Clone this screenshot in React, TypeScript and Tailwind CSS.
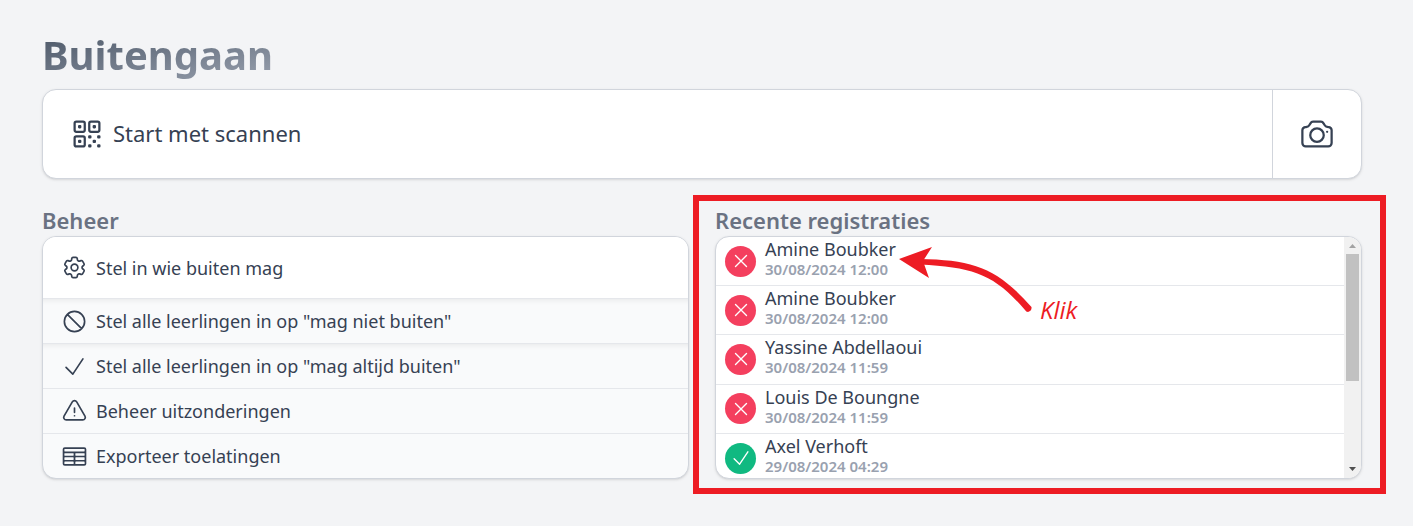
import type { ReactNode } from "react";
import {
  HiOutlineCamera,
  HiOutlineCheck,
  HiOutlineCog6Tooth,
  HiOutlineExclamationTriangle,
  HiOutlineNoSymbol,
  HiOutlineQrCode,
  HiOutlineTableCells,
  HiOutlineXMark,
} from "react-icons/hi2";

type Registration = { name: string; time: string; allowed: boolean };

const registrations: Registration[] = [
  { name: "Amine Boubker", time: "30/08/2024 12:00", allowed: false },
  { name: "Amine Boubker", time: "30/08/2024 12:00", allowed: false },
  { name: "Yassine Abdellaoui", time: "30/08/2024 11:59", allowed: false },
  { name: "Louis De Boungne", time: "30/08/2024 11:59", allowed: false },
  { name: "Axel Verhoft", time: "29/08/2024 04:29", allowed: true },
];

function ActionRow({ icon, label, className }: { icon: ReactNode; label: string; className: string }) {
  return (
    <li className="border-b border-gray-200 last:border-b-0">
      <button type="button" className={`flex w-full items-center gap-2 px-[18px] text-left text-lg leading-6 ${className}`}>
        {icon}
        <span>{label}</span>
      </button>
    </li>
  );
}

function RegistrationRow({ name, time, allowed }: Registration) {
  return (
    <li className="border-b border-gray-200 last:border-b-0">
      <button type="button" className="flex h-full w-full items-center gap-[9px] px-[9px] text-left">
        <span
          className={`flex size-[31px] shrink-0 items-center justify-center rounded-full text-white ${
            allowed ? "bg-[#10b981]" : "bg-[#f43f5e]"
          }`}
        >
          {allowed ? <HiOutlineCheck className="size-[22px]" /> : <HiOutlineXMark className="size-[22px]" />}
        </span>
        <span className="flex flex-col pb-1">
          <span className="text-lg leading-5">{name}</span>
          <span className="text-[15px] leading-5 font-semibold text-gray-400">{time}</span>
        </span>
      </button>
    </li>
  );
}

function Scrollbar() {
  return (
    <div aria-hidden="true" className="flex w-[17px] shrink-0 flex-col items-center bg-[#f1f1f1]">
      <svg viewBox="0 0 17 17" className="size-[17px] shrink-0" fill="#a3a3a3">
        <path d="M5 11h7L8.500 7z" />
      </svg>
      <div className="min-h-0 w-[13px] flex-[127] bg-[#c1c1c1]" />
      <div className="min-h-0 flex-[80]" />
      <svg viewBox="0 0 17 17" className="size-[17px] shrink-0" fill="#505050">
        <path d="M5 6h7l-3.500 4z" />
      </svg>
    </div>
  );
}

export default function App() {
  return (
    <main className="min-h-screen bg-gray-100 pt-7 pr-[51px] pb-12 pl-[42px] font-['Noto_Sans',sans-serif] text-gray-700">
      <h1 className="w-fit bg-linear-to-br from-gray-600 to-gray-400 bg-clip-text text-[40px] leading-[53px] font-bold text-transparent">
        Buitengaan
      </h1>

      <div className="mt-2 flex h-[90px] overflow-hidden rounded-[14px] border border-gray-300 bg-white shadow-sm">
        <button type="button" className="flex flex-1 items-center gap-2 px-[26px] pb-px text-left text-[22px]">
          <HiOutlineQrCode className="size-9" />
          <span>Start met scannen</span>
        </button>
        <button
          type="button"
          aria-label="Camera"
          className="flex w-[89px] items-center justify-center border-l border-gray-300 pb-px"
        >
          <HiOutlineCamera className="size-9" />
        </button>
      </div>

      <div className="mt-[27px] grid grid-cols-2 gap-[26px]">
        <section>
          <h2 className="pb-px text-[22px] leading-[29px] font-semibold text-gray-500">Beheer</h2>
          <ul className="overflow-hidden rounded-[14px] border border-gray-300 bg-gray-50 shadow-sm">
            <ActionRow
              icon={<HiOutlineCog6Tooth className="size-[27px]" />}
              label="Stel in wie buiten mag"
              className="h-[61px] bg-white"
            />
            <ActionRow
              icon={<HiOutlineNoSymbol className="size-[27px]" />}
              label={'Stel alle leerlingen in op "mag niet buiten"'}
              className="h-11 shadow-[inset_0_7px_6px_-6px_rgba(0,0,0,0.08)]"
            />
            <ActionRow
              icon={<HiOutlineCheck className="size-[27px]" />}
              label={'Stel alle leerlingen in op "mag altijd buiten"'}
              className="h-11 shadow-[inset_0_7px_6px_-6px_rgba(0,0,0,0.08)]"
            />
            <ActionRow
              icon={<HiOutlineExclamationTriangle className="size-[27px]" />}
              label="Beheer uitzonderingen"
              className="h-11"
            />
            <ActionRow
              icon={<HiOutlineTableCells className="size-[27px]" />}
              label="Exporteer toelatingen"
              className="h-11"
            />
          </ul>
        </section>

        <section className="relative">
          <h2 className="pb-px text-[22px] leading-[29px] font-semibold text-gray-500">Recente registraties</h2>
          <div className="flex h-[243px] overflow-hidden rounded-[14px] border border-gray-300 bg-white shadow-sm">
            <div className="min-w-0 flex-1 overflow-hidden">
              <ul className="grid h-[246px] auto-rows-fr">
                {registrations.map((item, index) => (
                  <RegistrationRow key={index} {...item} />
                ))}
              </ul>
            </div>
            <Scrollbar />
          </div>

          <div className="pointer-events-none absolute -top-[11px] -right-6 -bottom-[15px] -left-[22px] border-[6px] border-[#ed1c24]" />
          <svg
            viewBox="0 0 140 66"
            className="pointer-events-none absolute top-[41px] left-[181px] h-[66px] w-[140px]"
            aria-hidden="true"
          >
            <path
              d="M24 12C78 13 101 21 135.500 60Q136 64 132 65Q130 65 129 63C98 27 78 20.500 24 17.500Z"
              fill="#ed1c24"
            />
            <path d="M3 12L36 0L27 14L33 31Z" fill="#ed1c24" />
          </svg>
          <span className="pointer-events-none absolute top-[90px] left-[325px] font-['Segoe_Print','Open_Sans',cursive] text-2xl leading-7 text-[#ed1c24] italic">
            Klik
          </span>
        </section>
      </div>
    </main>
  );
}
